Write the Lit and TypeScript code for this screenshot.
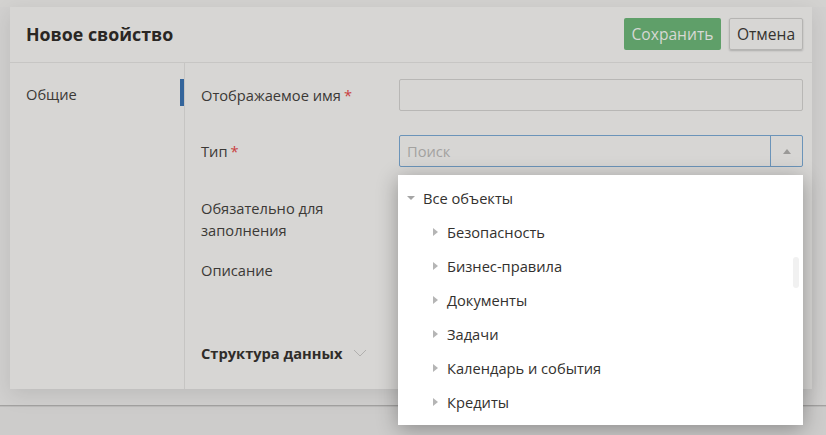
import { LitElement, html, css, svg } from "lit";
import { customElement } from "lit/decorators.js";

const items = ["Безопасность", "Бизнес-правила", "Документы", "Задачи", "Календарь и события", "Кредиты"];

@customElement("app-root")
export class AppRoot extends LitElement {
  static styles = css`
    :host { display: block; width: 826px; height: 435px; overflow: hidden; position: relative; background: #cdcccb; font-family: "Open Sans", sans-serif; font-size: 14.67px; line-height: 22px; color: #3b3936; }
    * { box-sizing: border-box; }
    .top { height: 7px; background: #d3d2d0; }
    .stage { height: 399px; padding: 0 14px 0 10px; background: #d1d0cf; border-bottom: 1px solid #a3a2a1; box-shadow: 0 1px 0 #bdbcbb; }
    .modal { height: 382px; width: 802px; background: #d7d6d4; box-shadow: 0 6px 20px rgba(0,0,0,.1); display: flex; flex-direction: column; }
    .head { height: 56px; flex: none; border-bottom: 1px solid #c7c6c4; display: flex; align-items: center; padding: 0 9px 0 16px; gap: 8px; }
    .title { font-size: 17.8px; font-weight: 700; color: #2a2724; margin-right: auto; position: relative; top: -1px; }
    .btn { height: 32px; border-radius: 2px; display: flex; align-items: center; justify-content: center; position: relative; top: -1px; font-size: 15.6px; }
    .save { width: 97px; background: #5f9f69; color: #d6d8d4; }
    .cancel { width: 74px; border: 1px solid #b5b4b2; color: #35332f; box-shadow: 0 1px 2px rgba(0,0,0,.2); }
    .body { flex: 1; display: flex; min-height: 0; }
    .side { width: 175px; flex: none; border-right: 1px solid #c6c5c3; padding: 20px 0 0 16px; position: relative; }
    .marker { position: absolute; right: 0; top: 16px; width: 4px; height: 27px; background: #34659b; }
    .form { flex: 1; padding: 16px 9px 0 16px; display: flex; flex-direction: column; }
    .row { display: flex; }
    .label { width: 198px; flex: none; }
    .req { color: #c9403e; margin-left: 3px; }
    .r1 { height: 56px; }
    .r1 .label, .r2 .label { padding-top: 5px; }
    .input { flex: 1; height: 32px; border: 1px solid #b8b7b5; border-radius: 2px; }
    .r2 { height: 62px; }
    .select { flex: 1; height: 32px; border: 1px solid #6b94b9; border-radius: 2px; display: flex; align-items: center; color: #a3a2a0; padding-left: 7px; }
    .ph { flex: 1; }
    .caret { width: 32px; height: 30px; border-left: 1px solid #6b94b9; display: flex; align-items: center; justify-content: center; }
    .r3 { height: 62px; }
    .r3 .label { width: 160px; }
    .r4 { height: 83px; }
    .struct { display: flex; align-items: center; gap: 11px; font-weight: 700; color: #2f2c29; }
    .drop { position: absolute; left: 398px; top: 175px; width: 405px; height: 250px; background: #fff; box-shadow: 0 4px 20px rgba(0,0,0,.32); padding: 6px 0 0 9px; color: #33312e; }
    .tree { height: 34px; display: flex; align-items: center; }
    .tree.child { padding-left: 26px; }
    .tree svg { flex: none; }
    .root svg { margin-right: 8px; }
    .child svg { margin-right: 9px; }
    .thumb { position: absolute; left: 395px; top: 82px; width: 6px; height: 31px; border-radius: 3px; background: #f1f1f1; }
  `;

  private tri(points: string, w: number, h: number, fill: string) {
    return html`<svg width=${w} height=${h} viewBox="0 0 ${w} ${h}">${svg`<polygon points=${points} fill=${fill}></polygon>`}</svg>`;
  }

  render() {
    return html`
      <div class="top"></div>
      <div class="stage">
        <div class="modal">
          <div class="head">
            <div class="title">Новое свойство</div>
            <div class="btn save">Сохранить</div>
            <div class="btn cancel">Отмена</div>
          </div>
          <div class="body">
            <div class="side">Общие<div class="marker"></div></div>
            <div class="form">
              <div class="row r1"><div class="label">Отображаемое имя<span class="req">*</span></div><div class="input"></div></div>
              <div class="row r2"><div class="label">Тип<span class="req">*</span></div>
                <div class="select"><span class="ph">Поиск</span><div class="caret">${this.tri("0,5 4,0 8,5", 8, 5, "#9a9997")}</div></div>
              </div>
              <div class="row r3"><div class="label">Обязательно для заполнения</div></div>
              <div class="row r4"><div class="label">Описание</div></div>
              <div class="struct">Структура данных
                <svg width="14" height="8" viewBox="0 0 14 8"><polyline points="1,1 7,7 13,1" fill="none" stroke="#b1b0ae" stroke-width="1"></polyline></svg>
              </div>
            </div>
          </div>
        </div>
      </div>
      <div class="drop">
        <div class="tree root">${this.tri("0,0 8,0 4,4", 8, 4, "#a5a5a5")}Все объекты</div>
        ${items.map((t) => html`<div class="tree child">${this.tri("0,0 5,4 0,8", 5, 8, "#b5b5b5")}${t}</div>`)}
        <div class="thumb"></div>
      </div>
    `;
  }
}
